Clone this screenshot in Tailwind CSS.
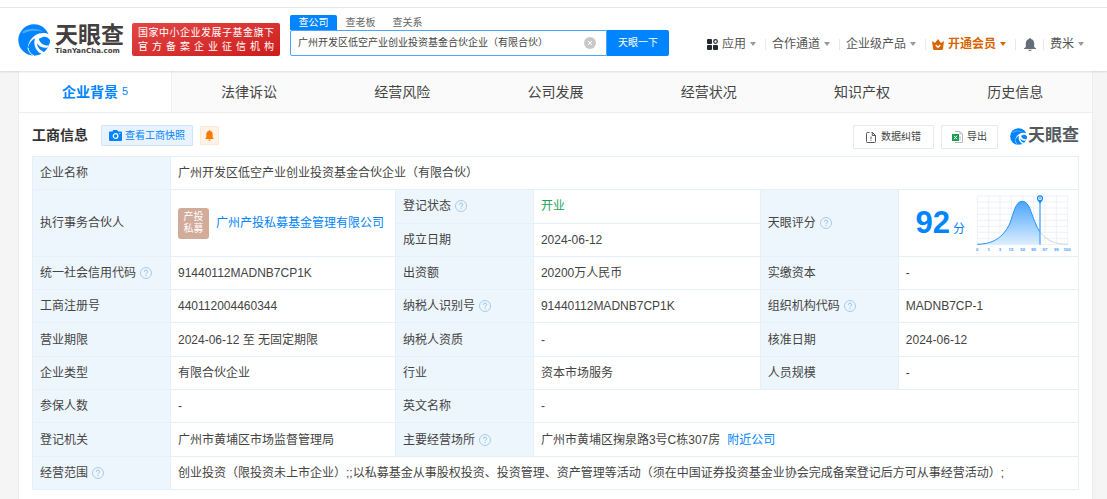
<!DOCTYPE html>
<html lang="zh-CN">
<head>
<meta charset="utf-8">
<title>天眼查</title>
<script src="https://cdn.jsdelivr.net/npm/@tailwindcss/browser@4"></script>
</head>
<body class="bg-[#f5f5f5] font-['Liberation_Sans','Noto_Sans_CJK_SC',sans-serif] text-xs text-[#444]">
<svg class="hidden">
  <symbol id="swirl" viewBox="0 0 100 100">
    <circle cx="50" cy="50" r="49" fill="#0084ff"/>
    <path d="M101 34 C88 26 68 27 54 35 C40 44 32 58 30 76 C36 58 43 49 53 45 C49 58 51 71 60 83 C65 90 71 94 78 94 L84 88 C70 84 60 73 59 60 C64 69 76 76 92 74 L97 67 C81 68 68 60 65 46 C78 40 90 44 101 54 Z" fill="#fff"/>
    <path d="M14 24 C32 12 60 12 80 25 C58 18 36 20 14 30 Z" fill="#fff" fill-opacity=".3"/>
    <path d="M70 42 C84 37 96 42 101 52 L98 62 C90 65 80 63 73 55 C84 58 90 53 86 48 C82 44 77 42 70 42 Z" fill="#0084ff"/>
    <path d="M31 74 C33 87 40 95 50 99" fill="none" stroke="#fff" stroke-width="3"/>
  </symbol>
  <symbol id="help" viewBox="0 0 12 12">
    <circle cx="6" cy="6" r="5.5" fill="none" stroke="#a9cbe8"/>
    <path d="M4.3 4.8C4.3 2.6 7.7 2.6 7.7 4.7C7.7 5.9 6 5.8 6 7.3M6 8.2V9.2" fill="none" stroke="#94bde2"/>
  </symbol>
  <symbol id="caret" viewBox="0 0 6 4"><path d="M0 0H6L3 4Z" fill="currentColor"/></symbol>
</svg>

<div class="relative z-10 bg-white pt-[7px] shadow-[0_1px_2px_rgba(0,0,0,0.12)]">
<header class="flex h-16 items-start border-t border-[#e6e6e6] pl-[18px] pr-[23px]">
  <a href="#" class="mt-4 flex items-center gap-[5px]" aria-label="天眼查">
    <svg class="size-8"><use href="#swirl"/></svg>
    <span class="flex flex-col gap-[6px] text-[#443e3e]">
      <span class="font-['Noto_Sans_CJK_SC',sans-serif] text-[23px] leading-[16px] font-bold">天眼查</span>
      <span class="font-['DejaVu_Sans',sans-serif] text-[7px] leading-[8px] font-bold">TianYanCha.com</span>
    </span>
  </a>
  <div class="ml-[8px] mt-[15px] flex h-[33px] w-[148px] flex-col justify-center rounded-[2px] bg-linear-to-br from-[#e34545] to-[#cc1a1a] px-[6px] text-[10px] leading-[14px] text-white">
    <div class="flex justify-between"><span>国</span><span>家</span><span>中</span><span>小</span><span>企</span><span>业</span><span>发</span><span>展</span><span>子</span><span>基</span><span>金</span><span>旗</span><span>下</span></div>
    <div class="flex justify-between"><span>官</span><span>方</span><span>备</span><span>案</span><span>企</span><span>业</span><span>征</span><span>信</span><span>机</span><span>构</span></div>
  </div>
  <form class="ml-[10px] mt-[7px] w-[379px] text-[10px]" onsubmit="return false">
    <div class="flex h-[15px] text-[#666]">
      <button type="button" class="w-[47px] rounded-t-[2px] bg-[#0084ff] text-white">查公司</button>
      <button type="button" class="w-[47px]">查老板</button>
      <button type="button" class="w-[47px]">查关系</button>
    </div>
    <div class="flex h-[26px]">
      <div class="flex flex-1 items-center rounded-l-[2px] border border-[#4ba6ff] pl-[7px] pr-[10px]">
        <input aria-label="查公司" class="min-w-0 flex-1 text-[#444] outline-none" value="广州开发区低空产业创业投资基金合伙企业（有限合伙）">
        <button type="button" aria-label="清空"><svg class="size-3" viewBox="0 0 12 12"><circle cx="6" cy="6" r="6" fill="#c8c8c8"/><path d="M4 4L8 8M8 4L4 8" stroke="#fff"/></svg></button>
      </div>
      <button class="w-[62px] rounded-r-[2px] bg-[#0084ff] text-white">天眼一下</button>
    </div>
  </form>
  <nav class="ml-auto mt-[26px] flex h-5 items-center text-[#555]">
    <a href="#" class="flex items-center gap-1"><svg class="size-[11px]" viewBox="0 0 11 11" fill="#222b33"><rect width="5" height="5" rx="1"/><rect y="6" width="5" height="5" rx="1"/><rect x="6" y="6" width="5" height="5" rx="1"/><circle cx="8.5" cy="2.5" r="1.8" fill="none" stroke="#222b33" stroke-width="1.2"/></svg>应用<svg class="h-1 w-1.5 text-[#999]"><use href="#caret"/></svg></a>
    <i class="ml-[9px] mr-[6px] h-[11px] w-px bg-[#e8e8e8]"></i>
    <a href="#" class="flex items-center gap-1">合作通道<svg class="h-1 w-1.5 text-[#999]"><use href="#caret"/></svg></a>
    <i class="ml-[9px] mr-[6px] h-[11px] w-px bg-[#e8e8e8]"></i>
    <a href="#" class="flex items-center gap-1">企业级产品<svg class="h-1 w-1.5 text-[#999]"><use href="#caret"/></svg></a>
    <i class="ml-[9px] mr-[6px] h-[11px] w-px bg-[#e8e8e8]"></i>
    <a href="#" class="flex items-center gap-1 font-bold text-[#d86400]"><svg class="h-[11px] w-3" viewBox="0 0 12 11"><path d="M0 2L3 4L6 0L9 4L12 2L11 9.5Q10.8 11 9.5 11H2.5Q1.2 11 1 9.5Z" fill="currentColor"/><path d="M3.7 6L6 8.3L8.3 6" fill="none" stroke="#fff" stroke-width="1.3"/></svg>开通会员<svg class="h-1 w-1.5"><use href="#caret"/></svg></a>
    <i class="ml-[9px] mr-[8px] h-[11px] w-px bg-[#e8e8e8]"></i>
    <a href="#" aria-label="消息"><svg class="h-[13px] w-3" viewBox="0 0 12 13" fill="#656d78"><path d="M6 0C6.6 0 6.9.4 6.9 1C9 1.5 10.2 3.2 10.2 5.5V9L12 10.6V11H0V10.6L1.8 9V5.5C1.8 3.2 3 1.5 5.1 1C5.1.4 5.4 0 6 0ZM4.3 11.8H7.7Q7.4 13 6 13Q4.6 13 4.3 11.8Z"/></svg></a>
    <i class="ml-[7px] mr-[6px] h-[11px] w-px bg-[#e8e8e8]"></i>
    <a href="#" class="flex items-center gap-1">费米<svg class="h-1 w-1.5 text-[#999]"><use href="#caret"/></svg></a>
  </nav>
</header>
</div>

<main class="ml-[18px] mr-[14px] border-x border-[#eee] bg-white pb-[10px]">
  <nav class="grid h-[42px] grid-cols-7 border-b border-[#eee] bg-[#fafafa] text-sm">
    <a href="#" class="flex items-center justify-center gap-1 border-r border-[#f0f0f0] bg-white font-bold text-[#0084ff]">企业背景<span class="text-[11px] font-normal">5</span></a>
    <a href="#" class="flex items-center justify-center">法律诉讼</a>
    <a href="#" class="flex items-center justify-center">经营风险</a>
    <a href="#" class="flex items-center justify-center">公司发展</a>
    <a href="#" class="flex items-center justify-center">经营状况</a>
    <a href="#" class="flex items-center justify-center">知识产权</a>
    <a href="#" class="flex items-center justify-center">历史信息</a>
  </nav>

  <section class="px-[13px]">
    <div class="flex h-[43px] items-start pt-3 text-[10px]">
      <h2 class="text-sm leading-[21px] font-bold text-[#333]">工商信息</h2>
      <button class="ml-[13px] flex h-[21px] items-center gap-[3px] rounded-[1px] border border-[#cfe5fb] bg-[#e8f3ff] px-[7px] text-[#0084ff]"><svg class="h-[11px] w-[13px]" viewBox="0 0 13 11"><path d="M3.5 1.5L4.3 0H8.2L9 1.5H12Q13 1.5 13 2.5V10Q13 11 12 11H1Q0 11 0 10V2.5Q0 1.5 1 1.5Z" fill="#0084ff"/><circle cx="6.6" cy="6" r="2.3" fill="none" stroke="#fff" stroke-width="1.2"/><circle cx="10.8" cy="3.6" r=".7" fill="#fff"/></svg>查看工商快照</button>
      <button aria-label="订阅" class="ml-[7px] mt-px flex size-[19px] items-center justify-center rounded-[1px] border border-[#fde8d6] bg-[#fff3e9]"><svg class="h-[11px] w-[9px]" viewBox="0 0 9 11" fill="#ff7a00"><path d="M4.5 0Q5 0 5 .7Q7.7 1.3 7.7 4.3V7.6L9 9H0L1.3 7.6V4.3Q1.3 1.3 4 .7Q4 0 4.5 0ZM3.3 9.5H5.7Q5.4 10.8 4.5 10.8Q3.6 10.8 3.3 9.5Z"/></svg></button>
      <button class="ml-auto flex h-6 items-center gap-[5px] rounded-[1px] border border-[#e8e8e8] px-3"><svg class="h-[11px] w-[10px]" viewBox="0 0 10 11" fill="none" stroke="#555"><path d="M3.5 .5H1.5Q.5 .5 .5 1.5V9.5Q.5 10.5 1.5 10.5H8.5Q9.5 10.5 9.5 9.5V3.5L6.5 .5H5.5M6.3 .5V3.5H9.5M5 4.5V7M5 7.8V8.8"/></svg>数据纠错</button>
      <button class="ml-[7px] flex h-6 items-center gap-[4px] rounded-[1px] border border-[#e8e8e8] px-[10px]"><svg class="h-3 w-[11px]" viewBox="0 0 11 12"><path d="M3 .5H8L10.5 3V11.5H3M8 .5V3H10.5M8 5V9.5" fill="none" stroke="#b8bcc0"/><rect y="3" width="7" height="7" fill="#1a9c50"/><path d="M2 4.8L5 8.2M5 4.8L2 8.2" stroke="#fff"/></svg>导出</button>
      <div class="ml-[12px] flex h-[22px] items-center gap-px text-[17px] font-bold text-[#555a60]"><svg class="size-[17px]"><use href="#swirl"/></svg>天眼查</div>
    </div>

    <table class="h-[334px] w-full table-fixed border-collapse border border-[#e6f0f8] text-left leading-[18px] [&_td]:border-y [&_td]:border-[#e6f0f8] [&_td]:px-[7px] [&_td]:py-0 [&_th]:border [&_th]:border-[#e6f0f8] [&_th]:bg-[#eef6fd] [&_th]:px-[7px] [&_th]:py-0 [&_th]:font-normal [&_tr]:h-[33px]">
      <colgroup><col class="w-[138px]"><col class="w-[21.5%]"><col class="w-[138px]"><col class="w-[21.7%]"><col class="w-[138px]"><col></colgroup>
      <tbody>
      <tr><th>企业名称</th><td colspan="5">广州开发区低空产业创业投资基金合伙企业（有限合伙）</td></tr>
      <tr><th rowspan="2">执行事务合伙人</th>
        <td rowspan="2"><div class="flex items-center gap-[7px] whitespace-nowrap"><span class="flex size-[31px] shrink-0 items-center justify-center rounded-[3px] bg-[#d2ab9b] text-center text-[10px] leading-3 text-white">产投<br>私募</span><a href="#" class="text-[#0084ff]">广州产投私募基金管理有限公司</a></div></td>
        <th><div class="flex items-center gap-1">登记状态<svg class="size-3"><use href="#help"/></svg></div></th><td class="text-[#1fa35a]">开业</td>
        <th rowspan="2"><div class="flex items-center gap-1">天眼评分<svg class="size-3"><use href="#help"/></svg></div></th>
        <td rowspan="2"><div class="flex items-center justify-end text-[#0084ff]">
          <div class="flex items-baseline gap-[3px]"><span class="text-[31px] leading-8 font-bold">92</span><span>分</span></div>
          <svg class="ml-[9px] h-[60px] w-[97px] shrink-0" viewBox="39 15 291 180" role="img" aria-label="评分分布">
            <defs><linearGradient id="fill" x1="0" y1="0" x2="0" y2="1"><stop offset="0" stop-color="#4aa5ff"/><stop offset="1" stop-color="#dceeff"/></linearGradient></defs>
            <path d="M49 24H320M49 42H320M49 60H320M49 79H320M49 97H320M49 115H320M49 133H320M49 152H320M49 170H320M49 24V170M83 24V170M117 24V170M151 24V170M185 24V170M218 24V170M252 24V170M286 24V170M320 24V170" fill="none" stroke="#e9eff6" stroke-width="2.5"/>
            <path d="M49 169C92 168 126 152 147 105C158 76 163 40 184 40C205 40 210 76 221 100Q228 120 237 132V170H49Z" fill="url(#fill)"/>
            <path d="M49 169C92 168 126 152 147 105C158 76 163 40 184 40C205 40 210 76 221 100Q228 120 237 132" fill="none" stroke="#2290fb" stroke-width="3"/>
            <path d="M237 132C258 160 285 168 320 169" fill="none" stroke="#cad8e4" stroke-width="3"/>
            <path d="M237 35V170" stroke="#4ba5ff" stroke-width="4"/>
            <path d="M229 35L237 47L245 35Z" fill="#168bff"/><circle cx="237" cy="31" r="7.5" fill="#fff" stroke="#168bff" stroke-width="3.5"/><circle cx="237" cy="31" r="2.5" fill="none" stroke="#168bff" stroke-width="2"/>
            <g fill="#3d9cff" font-size="13" font-weight="bold" text-anchor="middle"><text x="49" y="188">0</text><text x="83" y="188">1</text><text x="117" y="188">3</text><text x="150" y="188">15</text><text x="185" y="188">50</text><text x="218" y="188">85</text><text x="252" y="188">97</text><text x="286" y="188">99</text><text x="318" y="188">100</text></g>
          </svg></div></td></tr>
      <tr><th>成立日期</th><td>2024-06-12</td></tr>
      <tr><th><div class="flex items-center gap-1">统一社会信用代码<svg class="size-3"><use href="#help"/></svg></div></th><td>91440112MADNB7CP1K</td><th>出资额</th><td>20200万人民币</td><th>实缴资本</th><td>-</td></tr>
      <tr><th>工商注册号</th><td>440112004460344</td><th><div class="flex items-center gap-1">纳税人识别号<svg class="size-3"><use href="#help"/></svg></div></th><td>91440112MADNB7CP1K</td><th><div class="flex items-center gap-1">组织机构代码<svg class="size-3"><use href="#help"/></svg></div></th><td>MADNB7CP-1</td></tr>
      <tr><th>营业期限</th><td>2024-06-12 至 无固定期限</td><th>纳税人资质</th><td>-</td><th>核准日期</th><td>2024-06-12</td></tr>
      <tr><th>企业类型</th><td>有限合伙企业</td><th>行业</th><td>资本市场服务</td><th>人员规模</th><td>-</td></tr>
      <tr><th>参保人数</th><td>-</td><th>英文名称</th><td colspan="3">-</td></tr>
      <tr><th>登记机关</th><td>广州市黄埔区市场监督管理局</td><th><div class="flex items-center gap-1">主要经营场所<svg class="size-3"><use href="#help"/></svg></div></th><td colspan="3">广州市黄埔区掬泉路3号C栋307房<a href="#" class="ml-[7px] text-[#0084ff]">附近公司</a></td></tr>
      <tr><th><div class="flex items-center gap-1">经营范围<svg class="size-3"><use href="#help"/></svg></div></th><td colspan="5">创业投资（限投资未上市企业）;;以私募基金从事股权投资、投资管理、资产管理等活动（须在中国证券投资基金业协会完成备案登记后方可从事经营活动）;</td></tr>
      </tbody>
    </table>
  </section>
</main>
</body>
</html>
